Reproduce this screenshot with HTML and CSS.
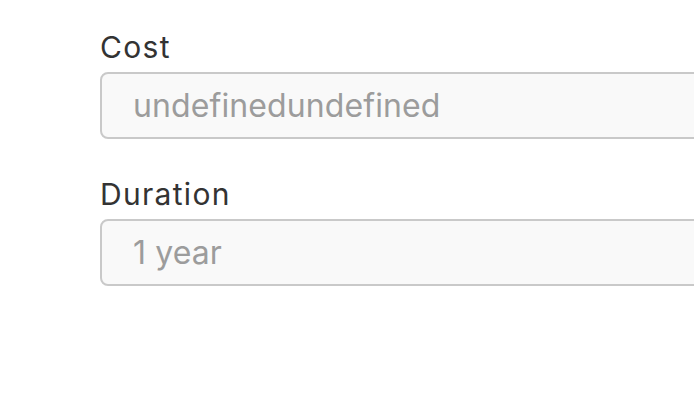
FILE: index.html
```html
<!DOCTYPE html>
<html>
<head>
<meta charset="utf-8">
<link rel="stylesheet" href="styles.css">
</head>
<body>
<form class="form">
  <div class="field">
    <label class="label" for="cost">Cost</label>
    <input class="input" id="cost" type="text" placeholder="undefinedundefined" disabled>
  </div>
  <div class="field">
    <label class="label" for="duration">Duration</label>
    <input class="input" id="duration" type="text" placeholder="1 year" disabled>
  </div>
</form>
</body>
</html>
```
FILE: styles.css
```css
html, body {
  margin: 0;
  padding: 0;
  background: #ffffff;
  overflow: hidden;
}
body {
  font-family: Inter, "Liberation Sans", Arial, sans-serif;
}
.form {
  display: flex;
  flex-direction: column;
  gap: 37px;
  padding: 29px 0 0 100px;
}
.field {
  display: flex;
  flex-direction: column;
  gap: 7px;
}
.label {
  font-size: 30px;
  line-height: 36px;
  letter-spacing: 1.3px;
  color: #333333;
}
.input {
  box-sizing: border-box;
  width: 700px;
  height: 67px;
  margin: 0;
  padding: 0 0 0 31px;
  border: 2px solid #c9c9c9;
  border-radius: 8px;
  background: #f9f9f9;
  font-family: Inter, "Liberation Sans", Arial, sans-serif;
  font-size: 32px;
  letter-spacing: 0.1px;
  color: #999999;
  outline: none;
}
.input::placeholder {
  color: #9c9c9c;
  opacity: 1;
}
```
